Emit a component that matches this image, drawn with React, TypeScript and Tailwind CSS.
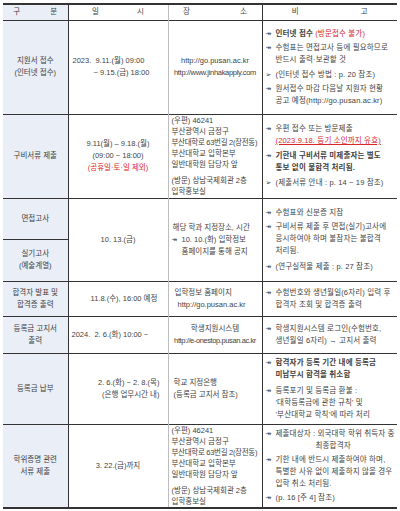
import React from 'react'

function Arrow() {
  return <span className="w-[10px] shrink-0 font-['DejaVu_Sans',sans-serif] text-[7px] leading-[12px]">↠</span>
}

function Tri() {
  return <span className="w-[10px] shrink-0 font-['DejaVu_Sans',sans-serif] text-[7px] leading-[12px]">➢</span>
}

function Item({ mark = 'arrow', children, className = '' }: { mark?: 'arrow' | 'tri'; children: React.ReactNode; className?: string }) {
  return (
    <div className={`flex ${className}`}>
      {mark === 'arrow' ? <Arrow /> : <Tri />}
      <div className="whitespace-nowrap">{children}</div>
    </div>
  )
}

const red = 'text-[#d8262b]'

function Address() {
  return (
    <div className="pl-[3px] leading-[11px] whitespace-nowrap">
      <p>(우편) 46241</p>
      <p>부산광역시 금정구</p>
      <p className="tracking-[-0.3px]">부산대학로 63번길 2(장전동)</p>
      <p>부산대학교 입학본부</p>
      <p>일반대학원 담당자 앞</p>
      <p className="mt-[5px]">(방문) 상남국제회관 2층</p>
      <p>입학홍보실</p>
    </div>
  )
}

export default function App() {
  const c1 = 'bg-[#e9eef7] text-center border-r border-r-[#333] whitespace-nowrap'
  const c2 = 'border-r border-r-[#bdbdbd] whitespace-nowrap'
  const c3 = 'border-r border-r-[#333] whitespace-nowrap'
  const c4 = 'pl-[3px] pr-[1px] tracking-[0.15px]'
  const row = 'border-b border-b-[#333]'

  return (
    <div className="bg-white w-[400px] h-[511px] overflow-hidden pt-[3px] pl-[3px] font-['Liberation_Sans','Noto_Sans_CJK_KR',sans-serif] text-[7.5px] leading-[12px] text-[#3f3f3f]">
      <table className="table-fixed border-collapse w-[394px]">
        <colgroup>
          <col className="w-[65px]" />
          <col className="w-[100px]" />
          <col className="w-[94px]" />
          <col className="w-[135px]" />
        </colgroup>
        <tbody>
          <tr className="h-[16px] border-t-2 border-t-[#333] border-b border-b-[#333]">
            <td className={c1}>
              <span className="tracking-[14px]">구 </span>분
            </td>
            <td className={`${c2} text-center`}>
              <span className="tracking-[18px]">일 </span>시
            </td>
            <td className={`${c3} text-center`}>
              <span className="tracking-[24px]">장 </span>소
            </td>
            <td className="text-center">
              <span className="tracking-[30px]">비 </span>고
            </td>
          </tr>

          <tr className={`h-[94px] ${row}`}>
            <td className={c1}>
              <p>지원서 접수</p>
              <p>(인터넷 접수)</p>
            </td>
            <td className={c2}>
              <p className="pl-[4px]">2023.&nbsp;&nbsp;9.11.(월) 09:00</p>
              <p className="pl-[25px]">~ 9.15.(금) 18:00</p>
            </td>
            <td className={`${c3} text-center`}>
              <p>http://go.pusan.ac.kr</p>
              <p className="tracking-[-0.3px]">http://www.jinhakapply.com</p>
            </td>
            <td className={c4}>
              <Item>
                <span className="font-bold">인터넷 접수 </span>
                <span className={red}>(방문접수 불가)</span>
              </Item>
              <Item className="mt-[2px]">
                수험표는 면접고사 등에 필요하므로
                <br />
                반드시 출력·보관할 것
              </Item>
              <Item mark="tri" className="mt-[3px]">(인터넷 접수 방법 : p. 20 참조)</Item>
              <Item className="mt-[2px]">
                원서접수 마감 다음날 지원자 현황
                <br />
                공고 예정(http://go.pusan.ac.kr)
              </Item>
            </td>
          </tr>

          <tr className={`h-[84px] ${row}`}>
            <td className={c1}>구비서류 제출</td>
            <td className={`${c2} text-center`}>
              <p>9.11(월) – 9.18.(월)</p>
              <p>(09:00 ~ 18:00)</p>
              <p className={red}>(공휴일·토·일 제외)</p>
            </td>
            <td className={c3}>
              <Address />
            </td>
            <td className={c4}>
              <Item>
                우편 접수 또는 방문제출
                <br />
                <span className={`${red} underline`}>(2023.9.18. 등기 소인까지 유효)</span>
              </Item>
              <Item className="mt-[3px]">
                <span className="font-bold">
                  기한내 구비서류 미제출자는 별도
                  <br />
                  통보 없이 불합격 처리됨.
                </span>
              </Item>
              <Item mark="tri" className="mt-[3px]">(제출서류 안내 : p. 14 ~ 19 참조)</Item>
            </td>
          </tr>

          <tr className="h-[41px] border-b border-b-[#333]">
            <td className={`${c1} border-b border-b-[#333]`}>면접고사</td>
            <td rowSpan={2} className={`${c2} text-center`}>10. 13.(금)</td>
            <td rowSpan={2} className={`${c3} pl-[3px]`}>
              <p className="pl-[1px]">해당 학과 지정장소, 시간</p>
              <Item>
                10. 10.(화) 입학정보
                <br />
                홈페이지를 통해 공지
              </Item>
            </td>
            <td rowSpan={2} className={c4}>
              <Item>수험표와 신분증 지참</Item>
              <Item className="mt-[2px]">
                구비서류 제출 후 면접(실기)고사에
                <br />
                응시하여야 하며 불참자는 불합격
                <br />
                처리됨.
              </Item>
              <Item className="mt-[4px]">(연구실적물 제출 : p. 27 참조)</Item>
            </td>
          </tr>
          <tr className={`h-[42px] ${row}`}>
            <td className={c1}>
              <p>실기고사</p>
              <p>(예술계열)</p>
            </td>
          </tr>

          <tr className={`h-[35px] ${row}`}>
            <td className={c1}>
              <p>합격자 발표 및</p>
              <p>합격증 출력</p>
            </td>
            <td className={`${c2} text-center`}>
              <span className="pl-[12px]">11.8.(수), 16:00 예정</span>
            </td>
            <td className={`${c3} pl-[6px]`}>
              <p>입학정보 홈페이지</p>
              <p className="pl-[3px]">http://go.pusan.ac.kr</p>
            </td>
            <td className={c4}>
              <Item>
                수험번호와 생년월일(6자리) 입력 후
                <br />
                합격자 조회 및 합격증 출력
              </Item>
            </td>
          </tr>

          <tr className={`h-[37px] ${row}`}>
            <td className={c1}>
              <p>등록금 고지서</p>
              <p>출력</p>
            </td>
            <td className={c2}>
              <p className="pl-[3px]">2024.&nbsp;&nbsp;2.&nbsp;6.(화) 10:00 ~</p>
            </td>
            <td className={`${c3} text-center`}>
              <p>학생지원시스템</p>
              <p className="tracking-[-0.4px]">http://e-onestop.pusan.ac.kr</p>
            </td>
            <td className={c4}>
              <Item>
                학생지원시스템 로그인(수험번호,
                <br />
                생년월일 6자리) → 고지서 출력
              </Item>
            </td>
          </tr>

          <tr className={`h-[71px] ${row}`}>
            <td className={c1}>등록금 납부</td>
            <td className={`${c2} text-right pr-[8px]`}>
              <p>2.&nbsp;6.(화) ~ 2.&nbsp;8.(목)</p>
              <p>(은행 업무시간 내)</p>
            </td>
            <td className={`${c3} pl-[5px]`}>
              <p>학교 지정은행</p>
              <p>(등록금 고지서 참조)</p>
            </td>
            <td className={c4}>
              <Item>
                <span className="font-bold">
                  합격자가 등록 기간 내에 등록금
                  <br />
                  미납부시 합격을 취소함
                </span>
              </Item>
              <Item className="mt-[4px]">
                등록포기 및 등록금 환불 :
                <br />
                '대학등록금에 관한 규칙' 및
                <br />
                '부산대학교 학칙'에 따라 처리
              </Item>
            </td>
          </tr>

          <tr className="h-[83px] border-b-2 border-b-[#333]">
            <td className={c1}>
              <p>학위증명 관련</p>
              <p>서류 제출</p>
            </td>
            <td className={`${c2} text-center`}>3.&nbsp;22.(금)까지</td>
            <td className={c3}>
              <Address />
            </td>
            <td className={c4}>
              <Item>
                제출대상자 : 외국대학 학위 취득자 중
                <br />
                <span className="pl-[40px]">최종합격자</span>
              </Item>
              <Item className="mt-[2px]">
                기한 내에 반드시 제출하여야 하며,
                <br />
                특별한 사유 없이 제출하지 않을 경우
                <br />
                입학 취소 처리됨.
              </Item>
              <Item className="mt-[2px]">(p. 16 [주 4] 참조)</Item>
            </td>
          </tr>
        </tbody>
      </table>
    </div>
  )
}
